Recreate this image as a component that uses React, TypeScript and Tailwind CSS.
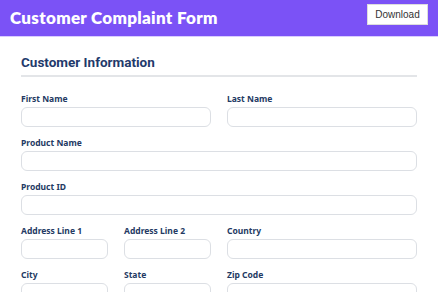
import React from "react";

const Field = ({ label, span }: { label: string; span: string }) => (
  <div className={`${span} flex flex-col`}>
    <label className="text-[8.5px] font-bold leading-[12px] text-[#243a63] mb-[2px]">{label}</label>
    <div className="h-[20px] rounded-[6px] border border-[#dcdfe4] bg-white" />
  </div>
);

export default function App() {
  return (
    <div className="w-[438px] h-[292px] overflow-hidden bg-white" style={{ fontFamily: '"Noto Sans", sans-serif' }}>
      <div className="h-[37px] bg-[#7b52f6] flex items-start justify-between pl-[10px] pr-[10px] border-b border-[#d9ccff]">
        <h1 className="text-white font-extrabold text-[17px] leading-[36px] tracking-[0.3px]" style={{ fontFamily: 'Lato, sans-serif' }}>
          Customer Complaint Form
        </h1>
        <button className="mt-[4px] h-[21px] w-[61px] bg-white text-[#333] text-[10px] border border-[#ddd]" style={{ fontFamily: '"Liberation Sans", sans-serif' }}>
          Download
        </button>
      </div>
      <div className="px-[21px] pt-[15px]">
        <h2 className="text-[13.5px] font-bold text-[#1f3a6b] leading-[20px] pb-[3px] border-b-2 border-[#e3e5e8]" style={{ fontFamily: 'Roboto, sans-serif' }}>
          Customer Information
        </h2>
        <div className="grid grid-cols-4 gap-x-[16px] gap-y-[10px] mt-[16px]">
          <Field label="First Name" span="col-span-2" />
          <Field label="Last Name" span="col-span-2" />
          <Field label="Product Name" span="col-span-4" />
          <Field label="Product ID" span="col-span-4" />
          <Field label="Address Line 1" span="col-span-1" />
          <Field label="Address Line 2" span="col-span-1" />
          <Field label="Country" span="col-span-2" />
          <Field label="City" span="col-span-1" />
          <Field label="State" span="col-span-1" />
          <Field label="Zip Code" span="col-span-2" />
        </div>
      </div>
    </div>
  );
}
